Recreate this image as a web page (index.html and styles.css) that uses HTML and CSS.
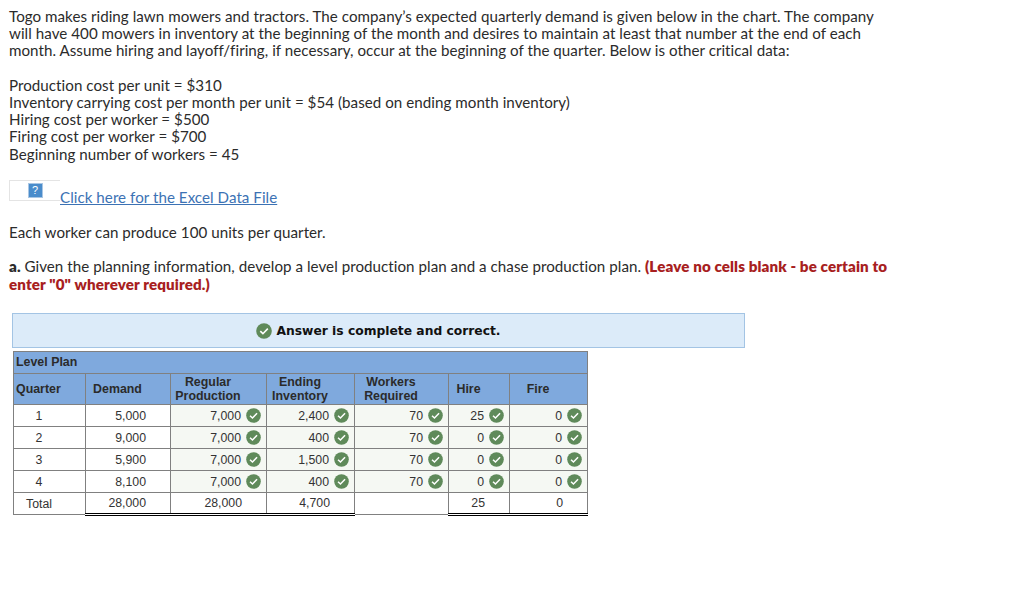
FILE: index.html
```html
<!DOCTYPE html>
<html lang="en">
<head>
<meta charset="utf-8">
<title>Togo production plan</title>
<link rel="stylesheet" href="styles.css">
</head>
<body>
<svg class="defs" width="0" height="0" aria-hidden="true">
  <symbol id="ok" viewBox="0 0 16 16">
    <circle cx="8" cy="8" r="7.8" fill="#5f8a5a"/>
    <path d="M4.3 8.2l2.6 2.5 4.9-5.1" fill="none" stroke="#fff" stroke-width="1.6"/>
  </symbol>
</svg>
<main class="page">
  <p class="para">Togo makes riding lawn mowers and tractors. The company’s expected quarterly demand is given below in the chart. The company<br>will have 400 mowers in inventory at the beginning of the month and desires to maintain at least that number at the end of each<br>month. Assume hiring and layoff/firing, if necessary, occur at the beginning of the quarter. Below is other critical data:</p>
  <p class="para">Production cost per unit = $310<br>Inventory carrying cost per month per unit = $54 (based on ending month inventory)<br>Hiring cost per worker = $500<br>Firing cost per worker = $700<br>Beginning number of workers = 45</p>
  <div class="file-row">
    <span class="file-box"><span class="qmark">?</span></span>
    <a class="file-link" href="#">Click here for the Excel Data File</a>
  </div>
  <p class="para">Each worker can produce 100 units per quarter.</p>
  <p class="para"><b>a.</b> Given the planning information, develop a level production plan and a chase production plan. <b class="warn">(Leave no cells blank - be certain to<br>enter "0" wherever required.)</b></p>
  <div class="answer-banner"><svg class="ok-big"><use href="#ok"/></svg><span>Answer is complete and correct.</span></div>
  <table class="plan">
    <colgroup>
      <col class="c1"><col class="c2"><col class="c3"><col class="c4"><col class="c5"><col class="c6"><col class="c7">
    </colgroup>
    <thead>
      <tr class="title-row"><th colspan="7">Level Plan</th></tr>
      <tr class="head-row">
        <th class="h-left">Quarter</th><th>Demand</th><th>Regular<br>Production</th><th>Ending<br>Inventory</th><th>Workers<br>Required</th><th>Hire</th><th>Fire</th>
      </tr>
    </thead>
    <tbody>
      <tr><td class="ctr">1</td><td class="num">5,000</td><td class="inp">7,000<svg class="ok"><use href="#ok"/></svg></td><td class="inp">2,400<svg class="ok"><use href="#ok"/></svg></td><td class="inp">70<svg class="ok"><use href="#ok"/></svg></td><td class="inp">25<svg class="ok"><use href="#ok"/></svg></td><td class="inp">0<svg class="ok"><use href="#ok"/></svg></td></tr>
      <tr><td class="ctr">2</td><td class="num">9,000</td><td class="inp">7,000<svg class="ok"><use href="#ok"/></svg></td><td class="inp">400<svg class="ok"><use href="#ok"/></svg></td><td class="inp">70<svg class="ok"><use href="#ok"/></svg></td><td class="inp">0<svg class="ok"><use href="#ok"/></svg></td><td class="inp">0<svg class="ok"><use href="#ok"/></svg></td></tr>
      <tr><td class="ctr">3</td><td class="num">5,900</td><td class="inp">7,000<svg class="ok"><use href="#ok"/></svg></td><td class="inp">1,500<svg class="ok"><use href="#ok"/></svg></td><td class="inp">70<svg class="ok"><use href="#ok"/></svg></td><td class="inp">0<svg class="ok"><use href="#ok"/></svg></td><td class="inp">0<svg class="ok"><use href="#ok"/></svg></td></tr>
      <tr><td class="ctr">4</td><td class="num">8,100</td><td class="inp">7,000<svg class="ok"><use href="#ok"/></svg></td><td class="inp">400<svg class="ok"><use href="#ok"/></svg></td><td class="inp">70<svg class="ok"><use href="#ok"/></svg></td><td class="inp">0<svg class="ok"><use href="#ok"/></svg></td><td class="inp">0<svg class="ok"><use href="#ok"/></svg></td></tr>
      <tr class="total"><td class="ctr-total">Total</td><td class="sum">28,000</td><td class="sum">28,000</td><td class="sum">4,700</td><td class="blank"></td><td class="sum">25</td><td class="sum">0</td></tr>
    </tbody>
  </table>
</main>
</body>
</html>
```
FILE: styles.css
```css
html, body { margin: 0; background: #fff; }
body { width: 1024px; height: 595px; overflow: hidden; font-family: "Lato", "Liberation Sans", sans-serif; font-size: 15.15px; font-variant-ligatures: none; letter-spacing: 0.04px; line-height: 17.2px; color: #2b2b2b; }
.defs { position: absolute; }
.page { padding: 8px 0 0 9px; }
.para { margin: 0 0 17.2px; white-space: nowrap; }
.para b { font-weight: 800; }
.para b.warn { color: #a81f1f; letter-spacing: 0.12px; }
.file-row { display: flex; align-items: flex-start; height: 22px; margin: 0 0 22px; }
.file-box { display: flex; justify-content: center; box-sizing: border-box; width: 51px; height: 21px; border: 1px solid #e4e4e4; border-right: 0; padding-top: 2px; }
.qmark { box-sizing: border-box; width: 15px; height: 15px; background: #4a8ccb; border: 1px solid #a9c6e4; color: #fff; font: 11px/13px "Liberation Sans", sans-serif; text-align: center; }
.file-link { color: #3c72b4; line-height: 17px; margin-top: 9px; }
.answer-banner { box-sizing: border-box; display: flex; align-items: center; justify-content: center; gap: 4px; width: 733px; height: 35px; margin: 20px 0 3px 3px; padding-top: 1px; background: #dcebf9; border: 1px solid #a3c4e4; font: bold 12.3px/16px "DejaVu Sans", sans-serif; letter-spacing: 0; color: #111; }
.ok-big { width: 16px; height: 16px; }
.plan { table-layout: fixed; border-collapse: collapse; width: 574px; margin-left: 4px; font: 12.3px/14px "Liberation Sans", sans-serif; letter-spacing: 0; color: #333; }
.c1 { width: 72px; } .c2 { width: 85px; } .c3 { width: 96px; } .c4 { width: 88px; } .c5 { width: 94px; } .c6 { width: 61px; } .c7 { width: 78px; }
.plan th, .plan td { border: 1px solid #808080; padding: 0; }
.plan th { font-size: 12.4px; }
.title-row th { height: 21px; background: #7fa9dd; text-align: left; padding-left: 2px; color: #2b2b2b; }
.head-row th { height: 30px; background: #7fa9dd; text-align: center; padding-right: 21px; color: #2b2b2b; }
.head-row th.h-left { text-align: left; padding: 0 0 0 2px; }
.plan tbody td { height: 20px; padding-top: 1px; }
.plan .ctr { text-align: center; padding-right: 21px; }
.plan .num, .plan .sum { text-align: right; padding-right: 24px; }
.plan .inp { background: #f5f8f3; text-align: right; padding-right: 5px; white-space: nowrap; }
.ok { width: 15px; height: 15px; margin: -2px 0 -2px 5px; vertical-align: -1px; }
.plan .total td { background: #fff; height: 19px; }
.plan .ctr-total { text-align: left; padding-left: 12px; }
.plan .sum { border-top: 1px solid #000; border-bottom: 3px double #000; }
```
